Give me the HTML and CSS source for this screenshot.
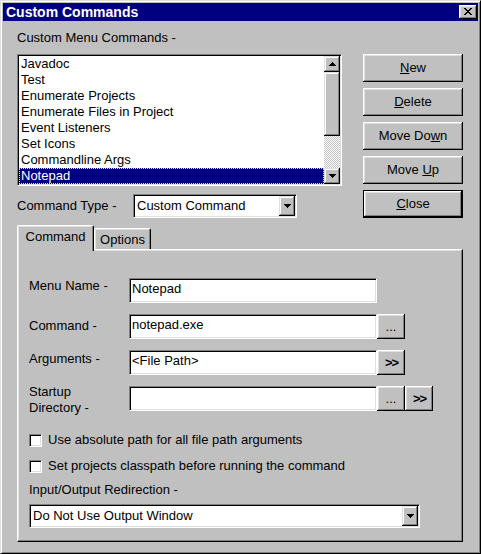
FILE: index.html
```html
<!DOCTYPE html>
<html>
<head>
<meta charset="utf-8">
<title>Custom Commands</title>
<link rel="stylesheet" href="styles.css">
</head>
<body>
<div class="window">
  <div class="titlebar">
    <span class="title">Custom Commands</span>
    <button class="close" aria-label="Close">
      <svg width="8" height="7" viewBox="0 0 8 7" shape-rendering="crispEdges"><path fill="#000" d="M0 0h2v1H0zM6 0h2v1H6zM1 1h2v1H1zM5 1h2v1H5zM2 2h4v1H2zM3 3h2v1H3zM2 4h4v1H2zM1 5h2v1H1zM5 5h2v1H5zM0 6h2v1H0zM6 6h2v1H6z"/></svg>
    </button>
  </div>
  <div class="client">
    <div class="top">
      <div class="left">
        <div class="label">Custom Menu Commands -</div>
        <div class="listbox">
          <ul class="items">
            <li>Javadoc</li>
            <li>Test</li>
            <li>Enumerate Projects</li>
            <li>Enumerate Files in Project</li>
            <li>Event Listeners</li>
            <li>Set Icons</li>
            <li>Commandline Args</li>
            <li class="sel">Notepad</li>
          </ul>
          <div class="vscroll">
            <span class="sbtn"><svg width="7" height="4" viewBox="0 0 7 4" shape-rendering="crispEdges"><path fill="#000" d="M3 0h1v1H3zM2 1h3v1H2zM1 2h5v1H1zM0 3h7v1H0z"/></svg></span>
            <span class="thumb"></span>
            <span class="track"></span>
            <span class="sbtn"><svg width="7" height="4" viewBox="0 0 7 4" shape-rendering="crispEdges"><path fill="#000" d="M0 0h7v1H0zM1 1h5v1H1zM2 2h3v1H2zM3 3h1v1H3z"/></svg></span>
          </div>
        </div>
        <div class="typerow">
          <span class="typelabel">Command Type -</span>
          <div class="combo typecombo">
            <span class="combo-text">Custom Command</span>
            <span class="dropbtn"><svg width="7" height="4" viewBox="0 0 7 4" shape-rendering="crispEdges"><path fill="#000" d="M0 0h7v1H0zM1 1h5v1H1zM2 2h3v1H2zM3 3h1v1H3z"/></svg></span>
          </div>
        </div>
      </div>
      <div class="actions">
        <button class="btn"><span><u>N</u>ew</span></button>
        <button class="btn"><span><u>D</u>elete</span></button>
        <button class="btn"><span>Move Do<u>w</u>n</span></button>
        <button class="btn"><span>Move <u>U</u>p</span></button>
        <button class="btn default"><span><u>C</u>lose</span></button>
      </div>
    </div>
    <div class="tabs">
      <div class="tab active">Command</div>
      <div class="tab">Options</div>
    </div>
    <div class="panel">
      <div class="form">
        <span class="flabel">Menu Name -</span>
        <div class="field">Notepad</div>
        <span class="flabel lower">Command -</span>
        <div class="field">notepad.exe</div>
        <button class="btn small dots"><span>...</span></button>
        <span class="flabel slight">Arguments -</span>
        <div class="field">&lt;File Path&gt;</div>
        <button class="btn small chev"><span>&gt;&gt;</span></button>
        <span class="flabel raise">Startup<br>Directory -</span>
        <div class="field"></div>
        <button class="btn small dots"><span>...</span></button>
        <button class="btn small chev"><span>&gt;&gt;</span></button>
      </div>
      <div class="checks">
        <div class="checkrow"><span class="check"></span><span>Use absolute path for all file path arguments</span></div>
        <div class="checkrow"><span class="check"></span><span>Set projects classpath before running the command</span></div>
      </div>
      <div class="redir-label">Input/Output Redirection -</div>
      <div class="combo redircombo">
        <span class="combo-text">Do Not Use Output Window</span>
        <span class="dropbtn"><svg width="7" height="4" viewBox="0 0 7 4" shape-rendering="crispEdges"><path fill="#000" d="M0 0h7v1H0zM1 1h5v1H1zM2 2h3v1H2zM3 3h1v1H3z"/></svg></span>
      </div>
    </div>
  </div>
</div>
</body>
</html>
```

FILE: styles.css
```css
* { box-sizing: border-box; }
html, body { margin: 0; padding: 0; }
body {
  background: #c0c0c0;
  font-family: "Liberation Sans", Arial, sans-serif;
  font-size: 13px;
  line-height: 16px;
  color: #000;
}

.window {
  width: 481px;
  height: 554px;
  background: #c0c0c0;
  border: 1px solid;
  border-color: #dfdfdf #000 #000 #dfdfdf;
  box-shadow: inset 1px 1px #fff, inset -1px -1px #808080;
  padding: 2px;
}

.titlebar {
  height: 18px;
  background: #000080;
  color: #fff;
  display: flex;
  justify-content: space-between;
  align-items: flex-start;
  padding-left: 3px;
}
.title {
  font-weight: bold;
  font-size: 14px;
  line-height: 17px;
  padding-top: 1px;
}
.close {
  width: 18px;
  height: 14px;
  margin: 2px 1px 0 0;
  padding: 0 1px 1px 0;
  border: 0;
  background: #c0c0c0;
  box-shadow: inset -1px -1px #000, inset 1px 1px #fff, inset -2px -2px #808080, inset 2px 2px #dfdfdf;
  display: flex;
  align-items: center;
  justify-content: center;
}
.close svg { display: block; }

.client { padding: 9px 0 0 14px; }

.top { display: flex; }
.left { width: 325px; }
.label { height: 16px; }

.listbox {
  margin-top: 8px;
  width: 325px;
  height: 132px;
  background: #fff;
  border: 1px solid;
  border-color: #808080 #fff #fff #808080;
  box-shadow: inset 1px 1px #000, inset -1px -1px #dfdfdf;
  padding: 1px;
  display: flex;
}
.items {
  flex: 1;
  list-style: none;
  margin: 0;
  padding: 0;
}
.items li {
  height: 16px;
  padding-left: 2px;
  white-space: nowrap;
}
.items li.sel {
  background: #000080;
  color: #fff;
  outline: 1px dotted #ffff00;
  outline-offset: -1px;
}

.vscroll {
  width: 16px;
  display: flex;
  flex-direction: column;
}
.sbtn, .thumb, .dropbtn {
  background: #c0c0c0;
  box-shadow: inset -1px -1px #000, inset 1px 1px #dfdfdf, inset -2px -2px #808080, inset 2px 2px #fff;
}
.sbtn {
  height: 16px;
  display: flex;
  align-items: center;
  justify-content: center;
  padding-bottom: 1px;
}
.sbtn svg, .dropbtn svg { display: block; }
.thumb { height: 64px; }
.track {
  flex: 1;
  background: repeating-conic-gradient(#fff 0 25%, #c0c0c0 0 50%) 0 0 / 2px 2px;
}

.typerow {
  margin-top: 8px;
  height: 24px;
  display: flex;
  align-items: center;
}
.typelabel { width: 116px; }

.combo {
  height: 24px;
  background: #fff;
  border: 1px solid;
  border-color: #808080 #fff #fff #808080;
  box-shadow: inset 1px 1px #000, inset -1px -1px #dfdfdf;
  padding: 1px;
  display: flex;
}
.typecombo { width: 164px; }
.combo-text {
  flex: 1;
  line-height: 20px;
  padding-left: 2px;
  white-space: nowrap;
  overflow: hidden;
}
.dropbtn {
  width: 16px;
  height: 20px;
  display: flex;
  align-items: center;
  justify-content: center;
  padding-left: 1px;
}

.actions {
  margin-left: 21px;
  padding-top: 24px;
  width: 100px;
  display: flex;
  flex-direction: column;
  gap: 6px;
}
.btn {
  font: inherit;
  color: #000;
  margin: 0;
  padding: 0;
  border: 0;
  background: #c0c0c0;
  box-shadow: inset -1px -1px #000, inset 1px 1px #fff, inset -2px -2px #808080, inset 2px 2px #dfdfdf;
  display: flex;
  align-items: center;
  justify-content: center;
  white-space: pre;
}
.actions .btn { width: 100px; height: 28px; }
.btn.default {
  border: 1px solid #000;
}

.tabs {
  margin-top: 7px;
  height: 24px;
  display: flex;
  align-items: flex-end;
}
.tab {
  height: 21px;
  width: 57px;
  padding-top: 3px;
  text-align: center;
  background: #c0c0c0;
  border-left: 1px solid #fff;
  border-top: 1px solid #fff;
  border-right: 1px solid #000;
  border-radius: 2px 2px 0 0;
  box-shadow: inset -1px 0 #808080, inset 1px 1px #dfdfdf;
}
.tab.active {
  position: relative;
  z-index: 1;
  width: 77px;
  height: 26px;
  margin-bottom: -2px;
}

.panel {
  width: 446px;
  height: 293px;
  border: 1px solid;
  border-color: #fff #000 #000 #fff;
  box-shadow: inset -1px -1px #808080, inset 1px 1px #dfdfdf;
  padding: 28px 0 0 11px;
}

.form {
  display: grid;
  grid-template-columns: 100px 248px 28px 28px;
  grid-auto-rows: 25px;
  row-gap: 11px;
}
.flabel { grid-column: 1; align-self: start; }
.flabel.lower { margin-top: 4px; }
.flabel.slight { margin-top: 1px; }
.flabel.raise { margin-top: -2px; }
.field {
  grid-column: 2;
  background: #fff;
  border: 1px solid;
  border-color: #808080 #fff #fff #808080;
  box-shadow: inset 1px 1px #000, inset -1px -1px #dfdfdf;
  padding: 2px 2px 0 2px;
  white-space: nowrap;
}
.btn.small { height: 25px; }
.btn.chev { font-weight: bold; letter-spacing: -1px; padding-left: 1px; }

.checks {
  margin-top: 21px;
  display: flex;
  flex-direction: column;
  gap: 10px;
}
.checkrow {
  height: 16px;
  display: flex;
  align-items: center;
  gap: 6px;
}
.check {
  width: 13px;
  height: 13px;
  background: #fff;
  border: 1px solid;
  border-color: #808080 #fff #fff #808080;
  box-shadow: inset 1px 1px #000, inset -1px -1px #dfdfdf;
}

.redir-label { margin-top: 8px; height: 16px; }
.redircombo { margin-top: 6px; width: 391px; }
```
